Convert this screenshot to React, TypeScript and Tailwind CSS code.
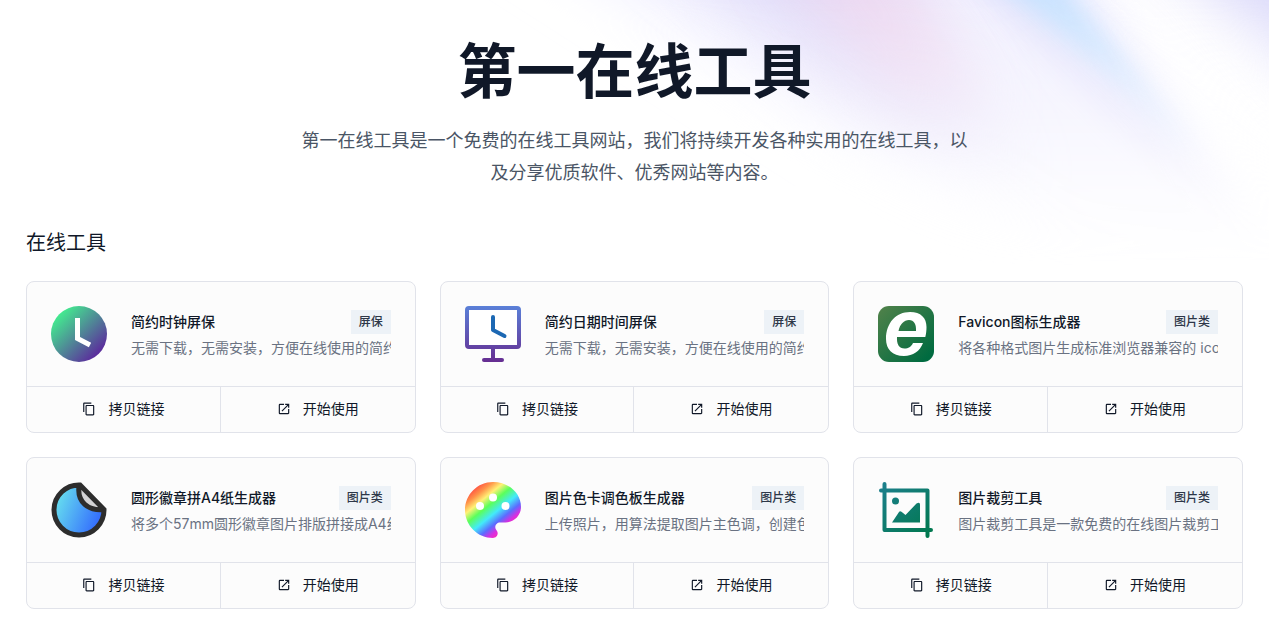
import React, { useState } from "react";
import { MdContentCopy, MdOpenInNew } from "react-icons/md";

type Tool = {
  id: string;
  name: string;
  description: string;
  tag: string;
  url: string;
  icon: React.ReactNode;
};

const ClockIcon = () => (
  <svg viewBox="0 0 56 56" className="size-14 shrink-0" aria-hidden="true">
    <defs>
      <linearGradient id="clock" x1="0.1" y1="0.15" x2="0.85" y2="0.9">
        <stop offset="0" stopColor="#42f08f" />
        <stop offset="1" stopColor="#5c259d" />
      </linearGradient>
    </defs>
    <circle cx="28" cy="28" r="28" fill="url(#clock)" />
    <path d="M26.5 12v20.5L39 39" fill="none" stroke="#fff" strokeWidth="5" />
  </svg>
);

const MonitorIcon = () => (
  <svg viewBox="0 0 56 56" className="size-14 shrink-0" aria-hidden="true">
    <defs>
      <linearGradient id="monitor" gradientUnits="userSpaceOnUse" x1="0" y1="0" x2="0" y2="56">
        <stop offset="0" stopColor="#5a80d8" />
        <stop offset="1" stopColor="#662d91" />
      </linearGradient>
    </defs>
    <rect x="2" y="2" width="52" height="39" rx="2" fill="#fff" stroke="url(#monitor)" strokeWidth="4" />
    <rect x="26" y="42" width="4" height="11" fill="url(#monitor)" />
    <rect x="17" y="52" width="22" height="4" rx="2" fill="url(#monitor)" />
    <path d="M28 11v13l11.500 6" fill="none" stroke="#1c68b3" strokeWidth="4" strokeLinecap="round" strokeLinejoin="round" />
  </svg>
);

const FaviconIcon = () => (
  <svg viewBox="0 0 56 56" className="size-14 shrink-0" aria-hidden="true">
    <defs>
      <linearGradient id="favicon" x1="0" y1="0" x2="0.9" y2="0.9">
        <stop offset="0" stopColor="#52824a" />
        <stop offset="1" stopColor="#006b40" />
      </linearGradient>
    </defs>
    <rect width="56" height="56" rx="11" fill="url(#favicon)" />
    <path
      fill="#fff"
      fillRule="evenodd"
      d="M45 37c-3 8-10 13-19 13C14 50 8 43 8 33 8 17 18 6 32 6c11 0 16.500 6 16.500 15 0 3.500-.4 7-1.200 10H19c-.5 7 2 11.500 7.500 11.500 4 0 6.500-1.500 8.500-5.500ZM20.500 25h17.500c.4-7-2-11-7-11s-9 4-10.500 11Z"
    />
  </svg>
);

const StickerIcon = () => (
  <svg viewBox="0 0 56 56" className="size-14 shrink-0" aria-hidden="true">
    <defs>
      <linearGradient id="sticker" x1="0" y1="0.3" x2="1" y2="0.7">
        <stop offset="0.05" stopColor="#65dcef" />
        <stop offset="1" stopColor="#2f62ff" />
      </linearGradient>
    </defs>
    <path d="M28 3.500A25 25 0 1 0 53 27.500Z" fill="url(#sticker)" />
    <path d="M28 3.500L53 27.500C38 29 27 19 28 3.500Z" fill="#d3d3d5" />
    <path
      d="M29 3A25 25 0 1 0 53 27.500L29 3ZM28 4C26 20 37 29 53 27.500"
      fill="none"
      stroke="#2d2d2d"
      strokeWidth="5"
    />
  </svg>
);

const PaletteIcon = () => (
  <svg viewBox="0 0 56 56" className="size-14 shrink-0" aria-hidden="true">
    <defs>
      <linearGradient id="palette" gradientUnits="userSpaceOnUse" x1="9" y1="6" x2="43" y2="48">
        <stop offset="0" stopColor="#ff5044" />
        <stop offset="0.13" stopColor="#ff9248" />
        <stop offset="0.27" stopColor="#fff176" />
        <stop offset="0.42" stopColor="#5bff5b" />
        <stop offset="0.6" stopColor="#43eafa" />
        <stop offset="0.76" stopColor="#5b6cff" />
        <stop offset="0.88" stopColor="#d82ee0" />
        <stop offset="1" stopColor="#ff2fb0" />
      </linearGradient>
    </defs>
    <path
      d="M28 0C12.500 0 0 12.500 0 28s12.500 28 28 28c2.600 0 4.700-2.100 4.700-4.700 0-1.200-.5-2.300-1.200-3.100-.7-.8-1.200-1.900-1.200-3.100 0-2.600 2.100-4.700 4.700-4.700h5.500C49 40.400 56 33.500 56 24.900 56 11.100 43.500 0 28 0Z"
      fill="url(#palette)"
    />
    <circle cx="15" cy="24" r="4" fill="#fff" />
    <circle cx="28" cy="15.500" r="4" fill="#fff" />
    <circle cx="40.500" cy="24" r="4" fill="#fff" />
  </svg>
);

const CropIcon = () => (
  <svg viewBox="0 0 56 56" className="size-14 shrink-0" aria-hidden="true">
    <defs>
      <linearGradient id="crop" gradientUnits="userSpaceOnUse" x1="4" y1="2" x2="50" y2="54">
        <stop offset="0" stopColor="#1c7f8c" />
        <stop offset="1" stopColor="#00784e" />
      </linearGradient>
    </defs>
    <path
      d="M6.500 2v46H53M3 8.500h46.500V54"
      fill="none"
      stroke="url(#crop)"
      strokeWidth="4"
      strokeLinecap="round"
      strokeLinejoin="round"
    />
    <circle cx="17.500" cy="19" r="3.500" fill="url(#crop)" />
    <path d="M14 40.500l7-10.500q1-1.500 2.500-.2l4 3.200L38.500 21.500q3.500-2 3.500 1v18Z" fill="url(#crop)" />
  </svg>
);

const tools: Tool[] = [
  {
    id: "clock",
    name: "简约时钟屏保",
    description: "无需下载，无需安装，方便在线使用的简约时钟屏保",
    tag: "屏保",
    url: "#clock",
    icon: <ClockIcon />,
  },
  {
    id: "datetime",
    name: "简约日期时间屏保",
    description: "无需下载，无需安装，方便在线使用的简约日期时间屏保",
    tag: "屏保",
    url: "#datetime",
    icon: <MonitorIcon />,
  },
  {
    id: "favicon",
    name: "Favicon图标生成器",
    description: "将各种格式图片生成标准浏览器兼容的 icon 图标",
    tag: "图片类",
    url: "#favicon",
    icon: <FaviconIcon />,
  },
  {
    id: "badge",
    name: "圆形徽章拼A4纸生成器",
    description: "将多个57mm圆形徽章图片排版拼接成A4纸张大小",
    tag: "图片类",
    url: "#badge",
    icon: <StickerIcon />,
  },
  {
    id: "palette",
    name: "图片色卡调色板生成器",
    description: "上传照片，用算法提取图片主色调，创建色卡调色板",
    tag: "图片类",
    url: "#palette",
    icon: <PaletteIcon />,
  },
  {
    id: "crop",
    name: "图片裁剪工具",
    description: "图片裁剪工具是一款免费的在线图片裁剪工具",
    tag: "图片类",
    url: "#crop",
    icon: <CropIcon />,
  },
];

// Soft diagonal light beams behind the header
const Backdrop = () => (
  <svg
    viewBox="0 0 829 280"
    className="pointer-events-none absolute top-0 right-0 -z-10 h-[280px] w-[829px]"
    aria-hidden="true"
  >
    <defs>
      <filter id="soft" x="-50%" y="-50%" width="200%" height="200%">
        <feGaussianBlur stdDeviation="32" />
      </filter>
      <filter id="fine" x="-50%" y="-50%" width="200%" height="200%">
        <feGaussianBlur stdDeviation="12" />
      </filter>
      <linearGradient id="fade" x1="0" y1="0" x2="0" y2="1">
        <stop offset="0" stopColor="#fff" />
        <stop offset="0.4" stopColor="#fff" stopOpacity="0.6" />
        <stop offset="0.7" stopColor="#fff" stopOpacity="0.2" />
        <stop offset="0.95" stopColor="#fff" stopOpacity="0" />
      </linearGradient>
      <mask id="beams">
        <rect width="829" height="280" fill="url(#fade)" />
      </mask>
    </defs>
    <g mask="url(#beams)">
      <path d="M60-90L620-90L900 290L620 270L340 90Z" fill="#f1f0fe" filter="url(#soft)" />
      <path d="M200-80L420-80L580 190L420 110Z" fill="#dcd7f8" opacity="0.75" filter="url(#soft)" />
      <path d="M330-60L440-60L550 120L450 90Z" fill="#f7d6ea" opacity="0.6" filter="url(#soft)" />
      <path d="M505-40L595-40L800 230L690 140Z" fill="#e6e4fc" opacity="0.85" filter="url(#fine)" />
      <path d="M540-30L612-30L760 160L690 90Z" fill="#c6e3ff" opacity="0.9" filter="url(#fine)" />
      <path d="M650-40L760-60L860 110L860 260L820 220Z" fill="#fff" opacity="0.8" filter="url(#fine)" />
      <path d="M670-90L920-90L920 120Z" fill="#dcdafa" filter="url(#soft)" />
    </g>
  </svg>
);

function ToolCard({ tool }: { tool: Tool }) {
  const [copied, setCopied] = useState(false);

  const copyLink = async () => {
    try {
      await navigator.clipboard.writeText(window.location.origin + tool.url);
      setCopied(true);
    } catch (error) {
      console.error("Error copying link : ", error);
    }
  };

  return (
    <li className="min-w-0 overflow-hidden rounded-lg border border-[#e1e3ea] bg-[#fcfcfc]">
      <div className="flex items-center gap-6 p-6">
        {tool.icon}
        <div className="min-w-0 flex-1">
          <div className="flex items-center justify-between">
            <h3 className="truncate text-sm font-medium text-gray-900">{tool.name}</h3>
            <span className="shrink-0 bg-[#edf2f7] px-2 text-xs leading-6 font-medium text-[#2d3748]">
              {tool.tag}
            </span>
          </div>
          <p className="mt-1 overflow-hidden text-sm whitespace-nowrap text-gray-500">
            {tool.description}
          </p>
        </div>
      </div>
      <div className="grid grid-cols-2 divide-x divide-[#e1e3ea] border-t border-[#e1e3ea] text-sm text-gray-900">
        <button
          type="button"
          className="flex h-[45px] items-center justify-center gap-3 pb-0.5"
          onClick={copyLink}
        >
          <MdContentCopy className="size-3.5" />
          {copied ? "已拷贝" : "拷贝链接"}
        </button>
        <a href={tool.url} className="flex h-[45px] items-center justify-center gap-3 pb-0.5">
          <MdOpenInNew className="size-3.5" />
          开始使用
        </a>
      </div>
    </li>
  );
}

export default function App() {
  return (
    <main className="relative isolate overflow-hidden bg-white pb-4 font-[Inter,'Noto_Sans_CJK_SC',sans-serif]">
      <Backdrop />
      <header className="mx-auto max-w-2xl pt-10 text-center">
        <h1 className="text-[59px] leading-16 font-bold text-gray-900">第一在线工具</h1>
        <p className="mt-[21px] text-lg leading-8 text-gray-600">
          第一在线工具是一个免费的在线工具网站，我们将持续开发各种实用的在线工具，以及分享优质软件、优秀网站等内容。
        </p>
      </header>
      <section className="mx-auto mt-10 max-w-[1217px]">
        <h2 className="text-xl text-gray-900">在线工具</h2>
        <ul className="mt-6 grid grid-cols-3 gap-6">
          {tools.map((tool) => (
            <ToolCard key={tool.id} tool={tool} />
          ))}
        </ul>
      </section>
    </main>
  );
}
